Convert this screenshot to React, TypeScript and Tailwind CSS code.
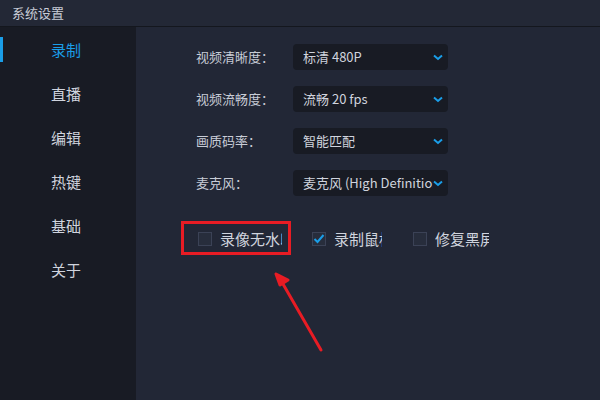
import { useState } from "react";

const NAV = ["录制", "直播", "编辑", "热键", "基础", "关于"];

const FIELDS = [
  { label: "视频清晰度：", value: "标清 480P" },
  { label: "视频流畅度：", value: "流畅 20 fps" },
  { label: "画质码率：", value: "智能匹配" },
  { label: "麦克风：", value: "麦克风 (High Definition Audio)" },
];

// widths copied from the screenshot – the labels are clipped there too
const CHECKS = [
  { label: "录像无水印", checked: false, w: "w-[114px]", tw: "w-[62px]" },
  { label: "录制鼠标", checked: true, w: "w-[101px]", tw: "w-[48px]" },
  { label: "修复黑屏", checked: false, w: "w-[100px]", tw: "w-[54px]" },
];

function Chevron() {
  return (
    <svg width="10" height="7" viewBox="0 0 10 7" className="shrink-0">
      <path d="M1 1.5 L5 5 L9 1.5" fill="none" stroke="#1a9ee8" strokeWidth="2" />
    </svg>
  );
}

function Select({ value }: { value: string }) {
  return (
    <div className="flex h-[26px] w-[155px] items-center rounded-[4px] bg-[#181b24] pl-[10px] pr-[5px]">
      <span className="flex-1 overflow-hidden whitespace-nowrap text-[13px] text-[#d0d4de]">{value}</span>
      <Chevron />
    </div>
  );
}

function Check({ checked }: { checked: boolean }) {
  return (
    <div className="flex h-[14px] w-[14px] shrink-0 items-center justify-center border border-[#3b4256] bg-[#272d3c]">
      {checked && (
        <svg width="12" height="10" viewBox="0 0 12 10">
          <path d="M1.5 5 L4.5 8 L10.5 1" fill="none" stroke="#1a9ee8" strokeWidth="2" />
        </svg>
      )}
    </div>
  );
}

export default function App() {
  const [active, setActive] = useState(0);

  return (
    <div
      className="relative flex h-[400px] w-[600px] flex-col overflow-hidden bg-[#222736]"
      style={{ fontFamily: '"Microsoft YaHei", "Noto Sans CJK SC", sans-serif' }}
    >
      {/* Title bar */}
      <div className="flex h-[27px] shrink-0 items-center border-b border-[#14171e] bg-[#232836] pl-[12px] text-[13px] text-[#c8ccd6]">
        系统设置
      </div>

      <div className="flex flex-1">
        {/* Sidebar */}
        <nav className="flex w-[136px] flex-col bg-[#181b24] pt-[1px]">
          {NAV.map((item, i) => (
            <div
              key={item}
              onClick={() => setActive(i)}
              className={`relative flex h-[44px] items-center pl-[51px] text-[15px] ${
                i === active ? "text-[#1a9ee8]" : "text-[#d0d4de]"
              }`}
            >
              {i === active && <div className="absolute left-0 top-[9px] h-[25px] w-[3px] bg-[#1a9ee8]" />}
              {item}
            </div>
          ))}
        </nav>

        {/* Settings */}
        <main className="flex flex-1 flex-col pl-[60px] pt-[17px]">
          <div className="flex flex-col gap-[16px]">
            {FIELDS.map((f) => (
              <div key={f.label} className="flex items-center">
                <span className="w-[97px] text-[13px] text-[#c8ccd6]">{f.label}</span>
                <Select value={f.value} />
              </div>
            ))}
          </div>

          <div className="mt-[32px] flex items-center pl-[2px]">
            {CHECKS.map((c) => (
              <div key={c.label} className={`flex items-center ${c.w}`}>
                <Check checked={c.checked} />
                <span className={`ml-[8px] overflow-hidden whitespace-nowrap text-[15px] text-[#d0d4de] ${c.tw}`}>
                  {c.label}
                </span>
              </div>
            ))}
          </div>
        </main>
      </div>

      {/* Annotation: highlight box */}
      <div className="pointer-events-none absolute left-[181px] top-[221px] h-[34px] w-[110px] border-[3px] border-[#e81c24]" />

      {/* Annotation: arrow */}
      <svg className="pointer-events-none absolute left-0 top-0" width="600" height="400">
        <path d="M321 350 L283 284" stroke="#e81c24" strokeWidth="3" strokeLinecap="round" />
        <path d="M276 274 L288 280 L280 285 Z" fill="#e81c24" stroke="#e81c24" strokeWidth="3" strokeLinejoin="round" />
      </svg>
    </div>
  );
}
